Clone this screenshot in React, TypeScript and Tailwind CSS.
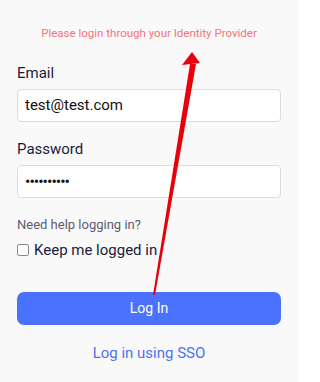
export default function App() {
  return (
    <div
      className="relative h-[382px] w-[298px] overflow-hidden bg-[#f9f9f9] px-[17px]"
      style={{ fontFamily: "Roboto, 'Liberation Sans', sans-serif" }}
    >
      <p className="pt-[25px] text-center text-[11.5px] leading-[16px] text-[#f4737c]">
        Please login through your Identity Provider
      </p>

      <label className="mt-[22px] block text-[15px] leading-[20px] text-[#1c1c3c]">Email</label>
      <div className="mt-[6px] flex h-[33px] items-center rounded-[4px] border border-[#dcdcdc] bg-white px-[7px] text-[15px] text-[#111]">
        test@test.com
      </div>

      <label className="mt-[17px] block text-[15px] leading-[20px] text-[#1c1c3c]">Password</label>
      <div className="mt-[6px] flex h-[33px] items-center rounded-[4px] border border-[#dcdcdc] bg-white px-[7px] text-[16px] tracking-[-1px] text-[#111]">
        ••••••••••
      </div>

      <p className="mt-[18px] text-[13px] leading-[18px] text-[#5c5c74]">Need help logging in?</p>

      <label className="mt-[6px] flex items-center gap-[5px] text-[15px] leading-[20px] text-[#1c1c3c]">
        <span className="h-[12px] w-[12px] rounded-[2px] border border-[#8a8a8a] bg-white" />
        Keep me logged in
      </label>

      <button className="mt-[32px] flex h-[33px] w-full items-center justify-center rounded-[7px] bg-[#4a72ff] text-[14px] text-white">
        Log In
      </button>

      <p className="mt-[18px] text-center text-[15px] leading-[20px] text-[#4a72f5]">Log in using SSO</p>

      <svg className="pointer-events-none absolute left-0 top-0" width="298" height="382" viewBox="0 0 298 382">
        <polygon points="190,64 196,64 155,295 153,295" fill="#e8000b" />
        <polygon points="192,52 200,63 182,65" fill="#e8000b" />
      </svg>
    </div>
  );
}
